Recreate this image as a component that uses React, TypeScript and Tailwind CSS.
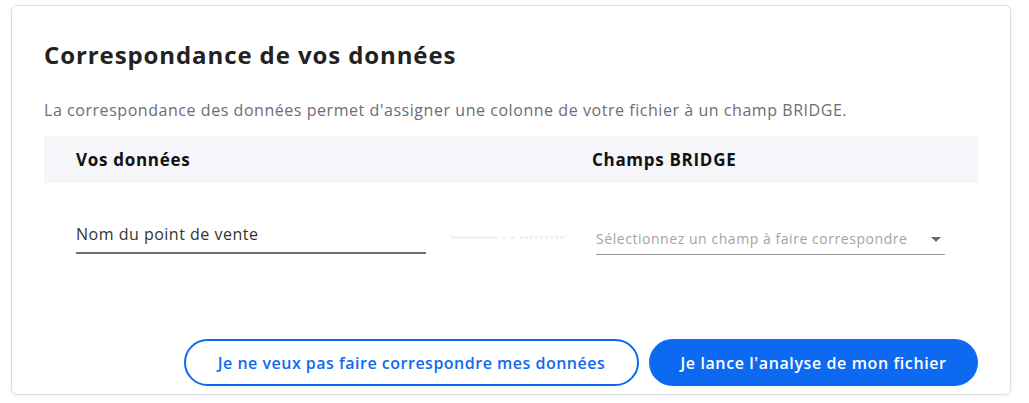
const font = { fontFamily: "'Open Sans', 'Liberation Sans', sans-serif" };

export default function App() {
  return (
    <div
      className="min-h-screen bg-white pt-[5px] pl-[11px]"
      style={font}
    >
      <div className="w-[1000px] h-[390px] rounded-md border border-[#dcdce6] bg-white shadow-[0_1px_4px_rgba(0,0,0,0.06)] px-[32px] pt-[34px] flex flex-col">
        {/* Titre */}
        <h1 className="text-[24px] leading-[30px] font-bold tracking-[0.9px] text-[#222222]">
          Correspondance de vos données
        </h1>

        <p className="mt-[30px] text-[16px] leading-[20px] tracking-[0.55px] text-[#6d6d75]">
          La correspondance des données permet d'assigner une colonne de votre fichier à un champ BRIDGE.
        </p>

        {/* En-tête du tableau */}
        <div className="mt-[16px] h-[47px] bg-[#f5f5fa] flex items-center text-[17px] font-bold tracking-[0.7px] text-[#111111]">
          <div className="w-[548px] pl-[32px]">Vos données</div>
          <div>Champs BRIDGE</div>
        </div>

        {/* Ligne de correspondance */}
        <div className="flex items-start h-[156px] pt-[39px]">
          <div className="ml-[32px] w-[350px] border-b-2 border-[#707070] pb-[7px] pt-[1px] text-[16px] leading-[22px] tracking-[0.5px] text-[#333333]">
            Nom du point de vente
          </div>
          <div className="ml-[25px] mt-[14px] w-[120px] flex items-center gap-[5px]">
            <div className="h-[3px] w-[46px] bg-[#f1f1f6]" />
            <div className="h-[3px] w-[4px] bg-[#f1f1f6]" />
            <div className="h-[3px] w-[4px] bg-[#f1f1f6]" />
            <div className="h-[3px] w-[46px] bg-[repeating-linear-gradient(90deg,#eeeef4_0_3px,transparent_3px_5px)]" />
          </div>
          <div className="ml-[25px] mt-[7px] w-[349px] border-b border-[#9a9a9a] pb-[5px] flex items-center justify-between">
            <span className="text-[14px] leading-[20px] tracking-[0.55px] text-[#a3a3a8]">
              Sélectionnez un champ à faire correspondre
            </span>
            <svg width="10" height="5" viewBox="0 0 10 5" className="mr-[4px]">
              <path d="M0 0h10L5 5z" fill="#6b6b73" />
            </svg>
          </div>
        </div>

        {/* Boutons */}
        <div className="flex justify-end gap-[10px]">
          <button className="h-[47px] w-[455px] rounded-full border-2 border-[#0d6af0] bg-white text-[16px] font-semibold tracking-[0.5px] text-[#0d6af0]">
            Je ne veux pas faire correspondre mes données
          </button>
          <button className="h-[47px] w-[329px] rounded-full bg-[#0d6af0] text-[16px] font-semibold tracking-[0.6px] text-white">
            Je lance l'analyse de mon fichier
          </button>
        </div>
      </div>
    </div>
  );
}
